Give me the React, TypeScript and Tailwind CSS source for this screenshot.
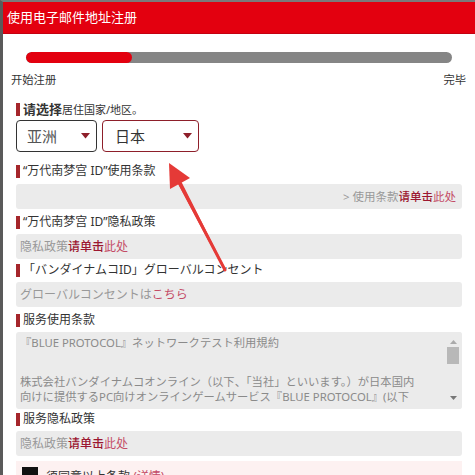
import React from "react";

const font = { fontFamily: '"Noto Sans", "Noto Sans CJK SC", "Noto Sans CJK JP", sans-serif' };

function Label({ children }: { children: React.ReactNode }) {
  return (
    <div className="flex items-center h-[14px] ml-[13px] text-[12px] text-[#333] leading-none">
      <span className="w-[4px] h-[13px] bg-[#a5262b] mr-[3px] shrink-0" />
      <span className="whitespace-nowrap">{children}</span>
    </div>
  );
}

function Caret() {
  return (
    <svg width="9" height="6" viewBox="0 0 9 6" className="shrink-0">
      <path d="M0 0 H9 L4.5 5.5 Z" fill="#8e1f2a" />
    </svg>
  );
}

export default function App() {
  return (
    <div
      className="relative w-[475px] h-[475px] overflow-hidden bg-white border-l-[3px] border-t-2 border-l-[#5a5a5a] border-t-[#7a7a7a]"
      style={font}
    >
      <div className="h-[32px] bg-[#e3000f] text-white text-[13px] pl-[4px] flex items-center border-b border-b-[#c40010]">
        使用电子邮件地址注册
      </div>

      <div className="mt-[18px] mx-[23px] h-[11px] rounded-full bg-[#858585] overflow-hidden">
        <div className="h-full w-[106px] rounded-full bg-[#e3000f]" />
      </div>

      <div className="mt-[9px] h-[16px] flex justify-between items-center pl-[8px] pr-[9px] text-[11.3px] text-[#333]">
        <span>开始注册</span>
        <span>完毕</span>
      </div>

      <div className="mt-[14px]">
        <Label>
          <span className="font-bold text-[13px]">请选择</span>
          <span className="text-[11px]">居住国家/地区。</span>
        </Label>
      </div>

      <div className="mt-[4px] ml-[13px] flex gap-[5px]">
        <div className="w-[81px] h-[32px] border border-[#333] rounded-[4px] flex items-center justify-between pl-[10px] pr-[6px] text-[15px] text-[#555]">
          <span>亚洲</span>
          <Caret />
        </div>
        <div className="w-[97px] h-[32px] border-[1.5px] border-[#8e1f2a] rounded-[4px] flex items-center justify-between pl-[12px] pr-[6px] text-[15px] text-[#333]">
          <span>日本</span>
          <Caret />
        </div>
      </div>

      <div className="mt-[12px]">
        <Label>“万代南梦宫 ID”使用条款</Label>
      </div>
      <div className="mt-[6px] mx-[13px] h-[25px] bg-[#ebebeb] rounded-[3px] flex items-center justify-end pr-[6px] text-[11.5px] text-[#999]">
        &gt; 使用条款<span className="text-[#9c1730] font-medium">请单击</span>
        <span className="text-[#c44b66]">此处</span>
      </div>

      <div className="mt-[6px]">
        <Label>“万代南梦宫 ID”隐私政策</Label>
      </div>
      <div className="mt-[5px] mx-[13px] h-[25px] bg-[#ebebeb] rounded-[3px] flex items-center pl-[4px] text-[12px] text-[#999]">
        隐私政策<span className="text-[#9c1730] font-medium">请单击</span>
        <span className="text-[#c44b66]">此处</span>
      </div>

      <div className="mt-[4px]">
        <Label>「バンダイナムコID」グローバルコンセント</Label>
      </div>
      <div className="mt-[5px] mx-[13px] h-[25px] bg-[#ebebeb] rounded-[3px] flex items-center pl-[4px] text-[12px] text-[#999]">
        グローバルコンセントは<span className="text-[#c44b66]">こちら</span>
      </div>

      <div className="mt-[6px]">
        <Label>服务使用条款</Label>
      </div>
      <div className="relative mt-[5px] mx-[13px] h-[77px] bg-[#ebebeb] rounded-[3px] overflow-hidden text-[11.3px] text-[#8a8a8a]">
        <div className="pl-[4px] pr-[20px] pt-[3px] leading-[15px] whitespace-nowrap">
          <div>『BLUE PROTOCOL』ネットワークテスト利用規約</div>
          <div className="mt-[24px]">株式会社バンダイナムコオンライン（以下、「当社」といいます。）が日本国内</div>
          <div>向けに提供するPC向けオンラインゲームサービス『BLUE PROTOCOL』(以下</div>
        </div>
        <div className="absolute right-0 top-0 w-[18px] h-full bg-[#ebebeb] flex flex-col items-center pt-[8px]">
          <svg width="7" height="4" viewBox="0 0 7 4">
            <path d="M0 4 L3.5 0 L7 4 Z" fill="#aaa" />
          </svg>
          <div className="mt-[3px] w-[12px] h-[17px] bg-[#b8b8b8]" />
          <div className="flex-1" />
          <svg width="7" height="4" viewBox="0 0 7 4" className="mb-[9px]">
            <path d="M0 0 H7 L3.5 4 Z" fill="#777" />
          </svg>
        </div>
      </div>

      <div className="mt-[3px]">
        <Label>服务隐私政策</Label>
      </div>
      <div className="mt-[5px] mx-[13px] h-[25px] bg-[#ebebeb] rounded-[3px] flex items-center pl-[4px] text-[12px] text-[#999]">
        隐私政策<span className="text-[#9c1730] font-medium">请单击</span>
        <span className="text-[#c44b66]">此处</span>
      </div>

      <div className="mt-[5px] mx-[13px] h-[30px] bg-[#fdf1f1] flex items-start pt-[5px] pl-[6px] gap-[8px] text-[12px] text-[#333]">
        <span className="w-[16px] h-[16px] bg-[#111] shrink-0 mt-[1px]" />
        <span className="mt-[2px]">
          须同意以上条款 <span className="text-[#c44b66]">(详情)</span>
        </span>
      </div>

      <svg className="absolute left-0 top-0 pointer-events-none" width="475" height="475" viewBox="0 0 475 475">
        <path d="M223 268 L221.5 269 L175 182 L178.5 180 Z" fill="#e53a37" />
        <line x1="222" y1="268" x2="176" y2="180" stroke="#e53a37" strokeWidth="3" strokeLinecap="round" />
        <path d="M166 161 L187 176 L167 187 Z" fill="#e53a37" />
      </svg>
    </div>
  );
}
